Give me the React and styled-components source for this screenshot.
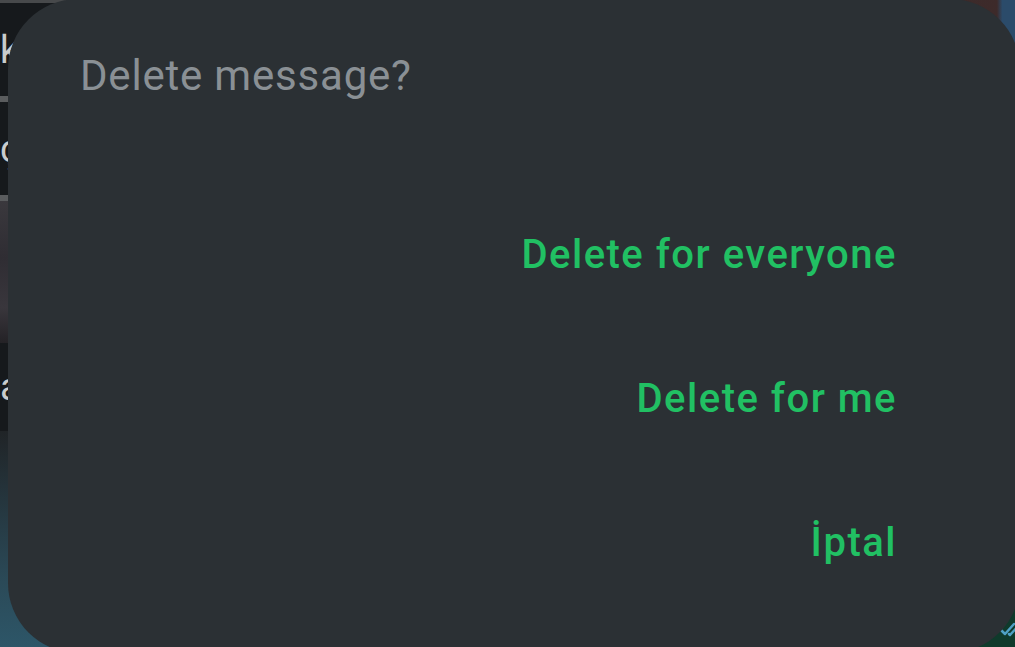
import React from 'react'
import styled, { createGlobalStyle } from 'styled-components'

const GlobalStyle = createGlobalStyle`
   html, body {
      margin: 0;
      padding: 0;
      background: #15191b;
      overflow: hidden;
   }
   body {
      font-family: Roboto, "Noto Sans", "Liberation Sans", sans-serif;
   }
`

const actions = [
   { id: 'everyone', label: 'Delete for everyone' },
   { id: 'me', label: 'Delete for me' },
   { id: 'cancel', label: 'İptal' }
]

const App = () => (
   <>
      <GlobalStyle />
      <Screen>
         <Backdrop>
            <TopEdge />
            <ChatRow height={93}>
               <Peek>k</Peek>
            </ChatRow>
            <Divider />
            <ChatRow height={93}>
               <Peek>ç</Peek>
            </ChatRow>
            <Divider />
            <Photo height={142} tone="#2f2d33" />
            <ChatRow height={88}>
               <Peek>a</Peek>
            </ChatRow>
            <Photo height={224} tone="#2b4a58" fade />
         </Backdrop>
         <Corner side="top" />
         <Corner side="bottom">
            <Ticks viewBox="0 0 24 16">
               <path d="M1 8l5 5L15 3M10 13l1 1 10-11" />
            </Ticks>
         </Corner>
         <Dialog role="dialog" aria-labelledby="dlg-title">
            <Title id="dlg-title">Delete message?</Title>
            <Actions>
               {actions.map(a => (
                  <ActionButton key={a.id}>{a.label}</ActionButton>
               ))}
            </Actions>
         </Dialog>
      </Screen>
   </>
)

export default App

const Screen = styled.div`
   position: relative;
   width: 1015px;
   height: 647px;
   overflow: hidden;
   background: #16191c;
`

const Backdrop = styled.div`
   display: flex;
   flex-direction: column;
   width: 100%;
   height: 100%;
`

const TopEdge = styled.div`
   height: 3px;
   background: #47494b;
`

const ChatRow = styled.div`
   height: ${p => p.height}px;
   display: flex;
   align-items: center;
   background: #16191c;
`

const Peek = styled.span`
   font-size: 38px;
   color: #c9cccd;
`

const Divider = styled.div`
   height: 6px;
   background: #5a5c5e;
`

const Photo = styled.div`
   height: ${p => p.height}px;
   background: ${p => (p.fade ? `linear-gradient(180deg, #202427 0%, ${p.tone} 70%, #2d5668 100%)` : `linear-gradient(180deg, #3a383d 0%, ${p.tone} 40%, #39363c 75%, #242226 100%)`)};
   flex: ${p => (p.fade ? 1 : 'none')};
`

const Corner = styled.div`
   position: absolute;
   right: 0;
   ${p => (p.side === 'top' ? 'top: 0;' : 'bottom: 0;')}
   width: 90px;
   height: 70px;
   background: ${p => (p.side === 'top' ? 'linear-gradient(90deg, #3b2b2b 0%, #3d2a2a 80%, #2b4b6a 86%, #2b4b6a 100%)' : '#0f3a2b')};
`

const Ticks = styled.svg`
   position: absolute;
   right: -8px;
   bottom: 10px;
   width: 24px;
   height: 16px;
   fill: none;
   stroke: #4ea0c4;
   stroke-width: 2.5;
   stroke-linecap: round;
   stroke-linejoin: round;
`

const Dialog = styled.div`
   position: absolute;
   left: 8px;
   top: -1px;
   width: 1012px;
   height: 654px;
   box-sizing: border-box;
   padding: 52px 123px 0 72px;
   border-radius: 70px;
   background: #2b3034;
   display: flex;
   flex-direction: column;
`

const Title = styled.h2`
   margin: 0;
   font-size: 42px;
   line-height: 50px;
   font-weight: 400;
   color: #8a9095;
   letter-spacing: 0.8px;
`

const Actions = styled.div`
   margin-top: 130px;
   display: flex;
   flex-direction: column;
   align-items: flex-end;
   gap: 96px;
`

const ActionButton = styled.button`
   border: 0;
   padding: 0;
   background: none;
   font-family: inherit;
   font-size: 40px;
   line-height: 48px;
   font-weight: 500;
   color: #21c063;
   letter-spacing: 1.5px;
   cursor: pointer;
`
